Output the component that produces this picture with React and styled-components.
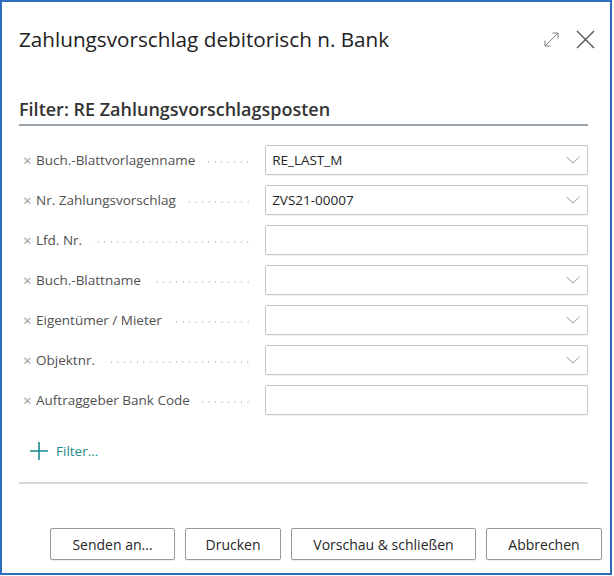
import React from 'react'
import styled, { createGlobalStyle } from 'styled-components'

const Global = createGlobalStyle`
  html, body {
    margin: 0;
    padding: 0;
    background: #ffffff;
  }
  body {
    font-family: 'Open Sans', 'Noto Sans', sans-serif;
  }
`

const Dialog = styled.div`
  box-sizing: border-box;
  width: 612px;
  height: 575px;
  border: 2px solid #2f6dbd;
  background: #fff;
  padding: 22px 22px 13px 17px;
  display: flex;
  flex-direction: column;
`

const Header = styled.div`
  display: flex;
  align-items: center;
  height: 30px;
`

const Title = styled.h1`
  flex: 1;
  margin: 0;
  font-size: 20.7px;
  font-weight: 400;
  color: #212121;
`

const HeaderIcons = styled.div`
  display: flex;
  align-items: center;
  gap: 16px;
  margin-right: -7px;
`

const Section = styled.div`
  margin-top: 44px;
  font-size: 18px;
  font-weight: 600;
  color: #333;
  padding-bottom: 4px;
  border-bottom: 2px solid #9aa3ad;
  line-height: 22px;
`

const Rows = styled.div`
  display: flex;
  flex-direction: column;
  gap: 10px;
  margin-top: 19px;
`

const Row = styled.div`
  display: flex;
  align-items: center;
  height: 30px;
`

const LabelCell = styled.div`
  width: 233px;
  display: flex;
  align-items: center;
  font-size: 13.5px;
  color: #505050;
  margin-right: 14px;
`

const Remove = styled.span`
  color: #9a9a9a;
  font-size: 15px;
  width: 13px;
  margin-left: 4px;
  line-height: 1;
`

const Leader = styled.span`
  flex: 1;
  height: 2px;
  margin: 3px 0 0 10px;
  background-image: radial-gradient(circle, #c4c4c4 0.8px, transparent 1px);
  background-size: 6.5px 2px;
  background-position: right center;
`

const Field = styled.div`
  box-sizing: border-box;
  width: 324px;
  height: 30px;
  border: 1px solid #c6c6c6;
  border-radius: 2px;
  box-shadow: 0 1px 1px rgba(0, 0, 0, 0.06);
  display: flex;
  align-items: center;
  padding: 0 6px;
  font-size: 13.5px;
  color: #262626;
`

const Value = styled.span`
  flex: 1;
`

const AddFilter = styled.div`
  display: flex;
  align-items: center;
  gap: 8px;
  margin: 26px 0 0 11px;
  color: #1a8a8c;
  font-size: 13.5px;
  height: 20px;
`

const Divider = styled.div`
  margin-top: 21px;
  height: 2px;
  background: #d5d9dd;
`

const Footer = styled.div`
  margin-top: auto;
  display: flex;
  justify-content: flex-end;
  gap: 10px;
  margin-right: -14px;
`

const Button = styled.button`
  box-sizing: border-box;
  height: 32px;
  width: ${p => p.w}px;
  border: 1px solid #999;
  border-radius: 2px;
  background: #fff;
  box-shadow: 0 1px 1px rgba(0, 0, 0, 0.08);
  font-family: inherit;
  font-size: 14px;
  color: #262626;
  padding: 0;
`

const Chevron = () => (
  <svg width="16" height="8" viewBox="0 0 16 8" fill="none">
    <path d="M1.5 1l6.5 6 6.5-6" stroke="#9a9a9a" strokeWidth="1" />
  </svg>
)

const fields = [
  { label: 'Buch.-Blattvorlagenname', value: 'RE_LAST_M', drop: true },
  { label: 'Nr. Zahlungsvorschlag', value: 'ZVS21-00007', drop: true },
  { label: 'Lfd. Nr.', value: '', drop: false },
  { label: 'Buch.-Blattname', value: '', drop: true },
  { label: 'Eigentümer / Mieter', value: '', drop: true },
  { label: 'Objektnr.', value: '', drop: true },
  { label: 'Auftraggeber Bank Code', value: '', drop: false },
]

export default function App() {
  return (
    <>
      <Global />
      <Dialog>
        <Header>
          <Title>Zahlungsvorschlag debitorisch n. Bank</Title>
          <HeaderIcons>
            <svg width="17" height="17" viewBox="0 0 17 17" fill="none" stroke="#808080" strokeWidth="1">
              <path d="M2 15L15 2" />
              <path d="M9.5 2h5.5v5.5" />
              <path d="M2 9.5v5.5h5.5" />
            </svg>
            <svg width="19" height="19" viewBox="0 0 19 19" fill="none" stroke="#555" strokeWidth="1.4">
              <path d="M1 1l17 17M18 1L1 18" />
            </svg>
          </HeaderIcons>
        </Header>

        <Section>Filter: RE Zahlungsvorschlagsposten</Section>

        <Rows>
          {fields.map(f => (
            <Row key={f.label}>
              <LabelCell>
                <Remove>×</Remove>
                {f.label}
                <Leader />
              </LabelCell>
              <Field>
                <Value>{f.value}</Value>
                {f.drop && <Chevron />}
              </Field>
            </Row>
          ))}
        </Rows>

        <AddFilter>
          <svg width="18" height="18" viewBox="0 0 18 18" stroke="#1a8a8c" strokeWidth="1.6">
            <path d="M9 0v18M0 9h18" />
          </svg>
          Filter...
        </AddFilter>

        <Divider />

        <Footer>
          <Button w={125}>Senden an...</Button>
          <Button w={96}>Drucken</Button>
          <Button w={185}>Vorschau &amp; schließen</Button>
          <Button w={116}>Abbrechen</Button>
        </Footer>
      </Dialog>
    </>
  )
}
